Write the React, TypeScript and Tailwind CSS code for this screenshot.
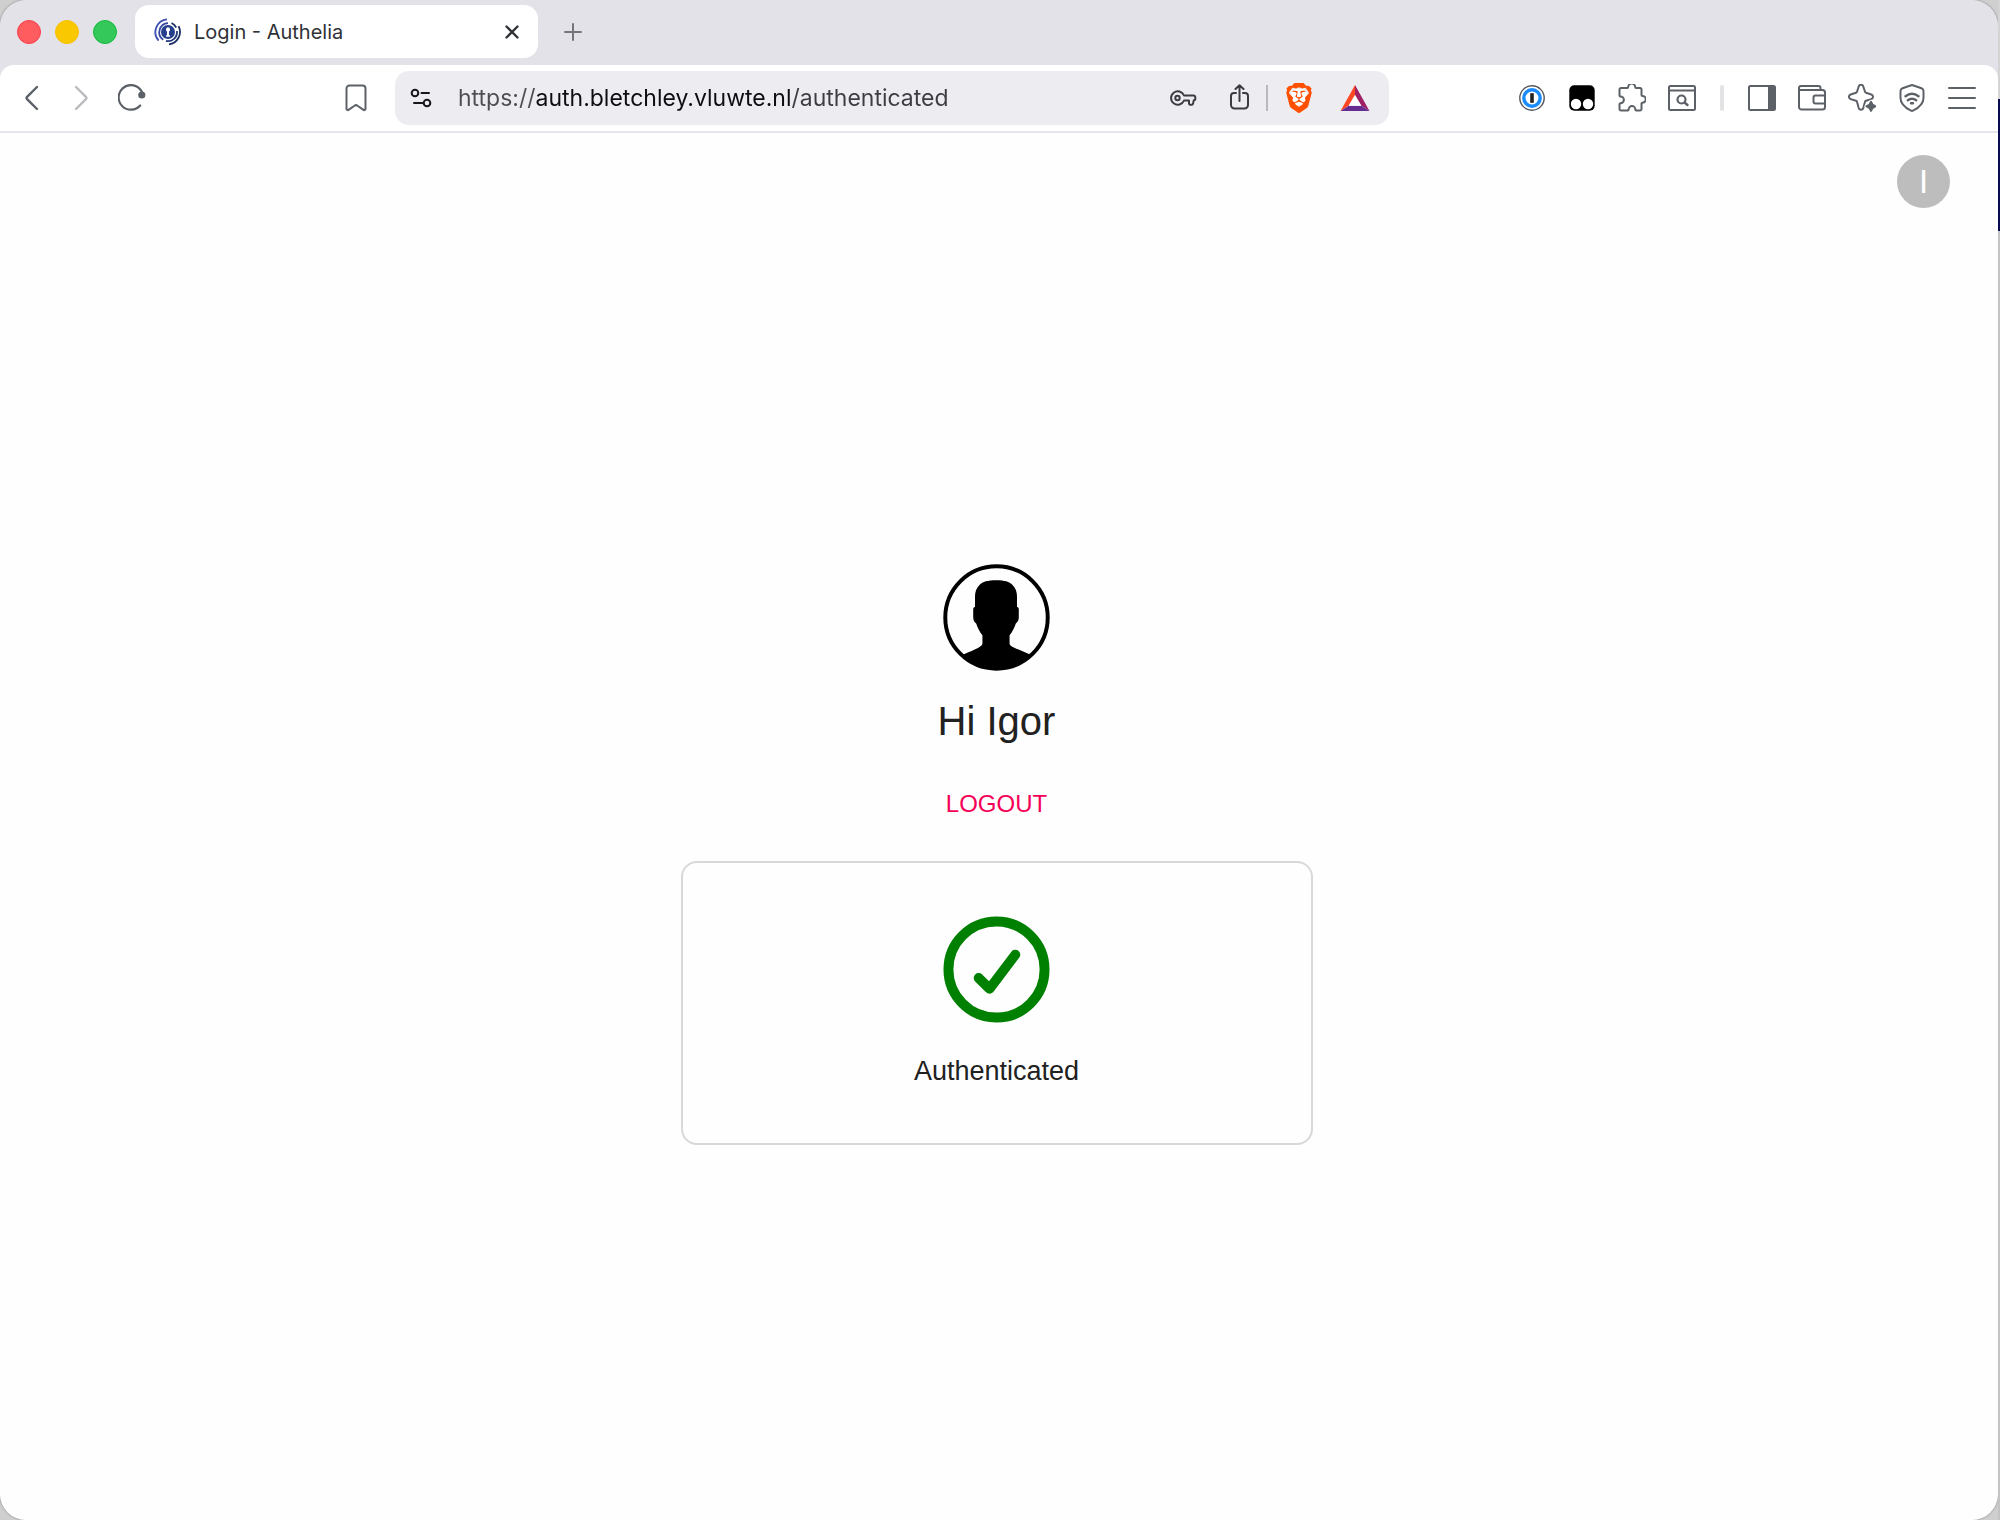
import { useState } from "react";
import type { ReactNode } from "react";
import { SiBrave } from "react-icons/si";

type IconProps = {
  children: ReactNode;
  className?: string;
};

// All toolbar glyphs share a 28px box and a 2px stroke
const Icon = ({ children, className = "" }: IconProps) => (
  <svg
    viewBox="0 0 28 28"
    className={`block size-7 shrink-0 ${className}`}
    fill="none"
    stroke="currentColor"
    strokeWidth="2"
    strokeLinecap="round"
    strokeLinejoin="round"
    aria-hidden="true"
  >
    {children}
  </svg>
);

const AutheliaLogo = () => (
  <svg viewBox="0 0 28 28" className="block size-7 shrink-0" fill="none" strokeWidth="1.8" aria-hidden="true">
    <path d="M13 1.3A12.9 12.9 0 0 0 4.6 22.6" stroke="#3f51b5" />
    <path d="M14 5.1A9.2 9.2 0 0 0 9.2 21.8" stroke="#3548a0" />
    <path d="M17.5 5A9.600 9.600 0 0 1 22.200 9.500" stroke="#1c2f66" />
    <path d="M24.6 8.2A12.6 12.6 0 0 1 15 26.4" stroke="#1c2f66" />
    <path d="M23 13A9.2 9.2 0 0 1 12 23" stroke="#223a80" />
    <circle cx="14" cy="14" r="7" fill="#263f8c" />
    <path d="M14 9.3a2.2 2.2 0 0 1 1 4.1v3.8h1v1.6h-4v-1.6h1v-3.8a2.2 2.2 0 0 1 1-4.1z" fill="#fff" />
  </svg>
);

const BatLogo = () => (
  <svg viewBox="0 0 30 28" className="block h-7 w-[30px] shrink-0" aria-hidden="true">
    <path d="M15 1L.5 27l8.2-5.2L15 11z" fill="#ff4724" />
    <path d="M15 1l14.5 26-8.2-5.2L15 11z" fill="#9e1f63" />
    <path d="M.5 27h29l-8.2-5.2H8.7z" fill="#662d91" />
    <path d="M15 11l6.3 10.8H8.7z" fill="#fff" />
  </svg>
);

const UserPortrait = () => (
  <svg viewBox="0 0 108 108" className="block size-[107px]" role="img" aria-label="User">
    <defs>
      <clipPath id="portrait">
        <circle cx="54" cy="54" r="52" />
      </clipPath>
    </defs>
    <circle cx="54" cy="54" r="51.7" fill="none" stroke="#000" strokeWidth="4" />
    <path
      clipPath="url(#portrait)"
      d="M54 16.5C62 16.5 67 18 70 21c3.500 3.500 4.700 7.500 4.700 12v10.500c1.400 0 1.800 1 1.800 3v7c0 3-.8 5-3 6.500-1.500 4.500-3.500 8.500-6.300 12v8c0 1.500.8 2.300 2.300 3.200C75 86.500 82 88.500 91 93v15H17V93c9-4.500 16-6.500 20.500-9.800 1.500-.9 2.300-1.700 2.300-3.200v-8c-2.800-3.500-4.800-7.500-6.300-12-2.200-1.500-3-3.500-3-6.500v-7c0-2 .4-3 1.800-3V33c0-4.500 1.200-8.500 4.700-12 3-3 8-4.500 17-4.500z"
    />
  </svg>
);

const SuccessIcon = () => (
  <svg viewBox="0 0 108 108" className="block size-[107px]" fill="none" stroke="#008000" strokeWidth="10" role="img" aria-label="Success">
    <circle cx="54" cy="54" r="48.500" />
    <path d="M36 62.500l11 11L73 39" strokeLinecap="round" strokeLinejoin="round" />
  </svg>
);

const TabStrip = () => (
  <div className="flex h-[65px] items-start bg-[#e3e2e8] pt-[5px] pl-[17px]">
    <div className="flex h-[53px] items-center gap-[14px]">
      <button type="button" aria-label="Close window" className="size-6 rounded-full border border-[#fa3e48] bg-[#ff5c60]" />
      <button type="button" aria-label="Minimize window" className="size-6 rounded-full border border-[#f5bf00] bg-[#fac800]" />
      <button type="button" aria-label="Zoom window" className="size-6 rounded-full border border-[#13bb3c] bg-[#34c759]" />
    </div>
    <div className="ml-[18px] flex h-[53px] w-[403px] items-center rounded-[14px] bg-white pr-4 pl-[19px]">
      <AutheliaLogo />
      <span className="ml-3 flex-1 text-[20px] leading-6 text-[#2f3237]">Login - Authelia</span>
      <button type="button" aria-label="Close tab" className="text-[#303338]">
        <svg viewBox="0 0 20 20" className="block size-5" fill="none" stroke="currentColor" strokeWidth="2.4" strokeLinecap="round">
          <path d="M4.500 4.500l11 11M15.500 4.500l-11 11" />
        </svg>
      </button>
    </div>
    <button type="button" aria-label="New tab" className="ml-[21px] flex h-[53px] items-center text-[#76757b]">
      <Icon>
        <path d="M14 6v16M6 14h16" />
      </Icon>
    </button>
  </div>
);

const AddressBar = () => {
  const [url, setUrl] = useState("https://auth.bletchley.vluwte.nl/authenticated");

  return (
    <div className="ml-[25px] flex h-[54px] min-w-0 flex-1 items-center rounded-[14px] bg-[#edecf1] pr-[19px] pl-[14px] text-[#3b3b42]">
      <button type="button" aria-label="Site information" className="text-[#17171b]">
        <svg viewBox="0 0 24 24" className="block size-6" fill="none" stroke="currentColor" strokeWidth="2" strokeLinecap="round">
          <circle cx="6" cy="7" r="3.300" />
          <path d="M12.500 7H20" />
          <circle cx="18" cy="17" r="3.300" />
          <path d="M5 17h8.500" />
        </svg>
      </button>
      {/* The host is darker than the scheme and the path */}
      <input
        type="text"
        aria-label="Address"
        value={url}
        onChange={(e) => setUrl(e.target.value)}
        spellCheck={false}
        className="ml-[25px] h-10 min-w-0 flex-1 bg-[linear-gradient(90deg,#4d4d54_78px,#0e0e12_78px,#0e0e12_333px,#3c3c43_333px)] bg-clip-text text-[23px] text-transparent outline-none"
      />
      <button type="button" aria-label="Passwords">
        <Icon>
          <circle cx="8.500" cy="14" r="2.200" />
          <path d="M15 11.500h9.500a1.800 1.800 0 0 1 1.800 1.800v1.400a1.500 1.500 0 0 1-1.500 1.500l-.8 3.500a1.200 1.200 0 0 1-1.200 1h-1.600a1.200 1.200 0 0 1-1.200-1V16.500h-5a6.700 6.700 0 1 1 0-5z" />
        </Icon>
      </button>
      <button type="button" aria-label="Share" className="ml-[29px]">
        <Icon>
          <path d="M10 9H8a3 3 0 0 0-3 3v9a3.500 3.500 0 0 0 3.500 3.500h10A3.500 3.500 0 0 0 22 21v-9a3 3 0 0 0-3-3h-2M13.500 17V1.500M9.500 5l4-3.800 4 3.800" />
        </Icon>
      </button>
      <span className="ml-3 h-[26px] w-[2px] bg-[#b9b9be]" />
      <button type="button" aria-label="Brave Shields" className="relative ml-[17px] flex h-[30px] w-7 items-center justify-center">
        <span className="absolute inset-x-1.5 top-1.5 bottom-2 rounded-[6px] bg-white" />
        <SiBrave className="relative size-[30px] shrink-0 text-[#ff5000]" />
      </button>
      <button type="button" aria-label="Brave Rewards" className="ml-[27px]">
        <BatLogo />
      </button>
    </div>
  );
};

const Toolbar = () => (
  <div className="bg-[#e3e2e8]">
    <div className="flex h-[68px] items-center rounded-t-[14px] border-b-2 border-[#e6e5ec] bg-white pr-[22px] pl-[18px] text-[#5c6067]">
      <div className="flex items-center gap-[22px]">
        <button type="button" aria-label="Back">
          <Icon>
            <path d="M19 3L8.800 13.200a1.200 1.200 0 0 0 0 1.600L19 25" strokeWidth="2.400" />
          </Icon>
        </button>
        <button type="button" aria-label="Forward" className="text-[#b9bbbf]">
          <Icon>
            <path d="M8 3l10.200 10.200a1.200 1.200 0 0 1 0 1.600L8 25" strokeWidth="2.400" />
          </Icon>
        </button>
        <button type="button" aria-label="Reload">
          <Icon>
            <path d="M22.200 21.500A12.300 12.300 0 1 1 22.500 5.700L24 8" strokeWidth="2.200" />
            <circle cx="23.800" cy="11" r="3.600" fill="currentColor" stroke="none" />
          </Icon>
        </button>
      </div>
      <button type="button" aria-label="Bookmark this tab" className="ml-[196px]">
        <Icon>
          <path d="M7.500 1.500h13a3 3 0 0 1 3 3v20.300a1.300 1.300 0 0 1-2 1.100l-6-4.200a2.500 2.500 0 0 0-3 0l-6 4.200a1.300 1.300 0 0 1-2-1.100V4.500a3 3 0 0 1 3-3z" />
        </Icon>
      </button>
      <AddressBar />
      <div className="ml-[129px] flex items-center gap-[22px]">
        <button type="button" aria-label="1Password">
          <Icon>
            <circle cx="14" cy="14" r="12.200" stroke="#55565a" strokeWidth="1.400" fill="#fff" />
            <circle cx="14" cy="14" r="8.200" stroke="#1a8cff" strokeWidth="3.400" />
            <path d="M14 9.200v9.600" stroke="#222" strokeWidth="3.600" strokeLinecap="butt" />
          </Icon>
        </button>
        <button type="button" aria-label="Tampermonkey">
          <Icon>
            <rect x="1.300" y="1.300" width="25.400" height="25.400" rx="5" fill="#000" stroke="none" />
            <circle cx="8" cy="20" r="5.200" fill="#fff" stroke="none" />
            <circle cx="20" cy="20" r="5.200" fill="#fff" stroke="none" />
          </Icon>
        </button>
        <button type="button" aria-label="Extensions">
          <Icon>
            <path d="M3 4h6.300c.6 0 .9-.4.9-1a3.500 3.500 0 0 1 7 0c0 .6.300 1 .9 1H22a1.500 1.500 0 0 1 1.500 1.500V11c0 .6.300.9.900.9a3.400 3.400 0 0 1 0 6.800c-.6 0-.9.300-.9.900V25a1.500 1.500 0 0 1-1.500 1.500h-3.800c-.6 0-.8-.400-.8-1a3.400 3.400 0 0 0-6.800 0c0 .6-.200 1-.800 1H3A1.500 1.500 0 0 1 1.500 25v-5c0-.6.400-.8 1-.8a3.400 3.400 0 0 0 0-6.800c-.6 0-1-.300-1-.9v-6A1.500 1.500 0 0 1 3 4z" />
          </Icon>
        </button>
        <button type="button" aria-label="Search tabs">
          <Icon>
            <rect x="1" y="2" width="26" height="24" rx="1.500" />
            <path d="M1.500 6.500h25" />
            <circle cx="13.500" cy="15.500" r="4" strokeWidth="2.200" />
            <path d="M16.500 18.500l3 2.500" strokeWidth="2.400" />
          </Icon>
        </button>
        <span className="mx-[2px] h-[26px] w-1 rounded-sm bg-[#e3e3e6]" />
        <button type="button" aria-label="Sidebar">
          <Icon>
            <rect x="1" y="2" width="26" height="24" rx="1.500" />
            <path d="M20 2h6.500v24H20z" fill="currentColor" stroke="none" />
          </Icon>
        </button>
        <button type="button" aria-label="Wallet">
          <Icon>
            <path d="M22.500 6V4a2 2 0 0 0-2-2H3a2 2 0 0 0-2 2v19a2.500 2.500 0 0 0 2.500 2.500h21A2.500 2.500 0 0 0 27 23V8.500A2.500 2.500 0 0 0 24.500 6H2.500M27 11.500H17.500a2 2 0 0 0-2 2v4a2 2 0 0 0 2 2H27" />
          </Icon>
        </button>
        <button type="button" aria-label="Leo AI">
          <Icon>
            <path d="M10.700 2.500c.7-2.300 3.900-2.300 4.600 0l1.700 5.300a1.500 1.500 0 0 0 1 1l5.300 1.700c2.300.7 2.300 3.900 0 4.600L18 16.800a1.500 1.500 0 0 0-1 1l-1.700 6.300c-.7 2.300-3.900 2.300-4.600 0L9 17.800a1.500 1.500 0 0 0-1-1L2.700 15.100c-2.300-.7-2.300-3.900 0-4.600L8 8.800a1.500 1.500 0 0 0 1-1z" />
            <path d="M23 17.800c.6 2.900 1.500 3.700 4.500 4.500-3 .8-3.900 1.700-4.500 4.600-.6-2.900-1.500-3.800-4.500-4.600 3-.8 3.900-1.600 4.500-4.500z" fill="#fff" stroke="#fff" strokeWidth="4" />
            <path d="M23 17.800c.6 2.900 1.500 3.700 4.500 4.500-3 .8-3.900 1.700-4.500 4.600-.6-2.900-1.500-3.800-4.500-4.600 3-.8 3.900-1.600 4.500-4.500z" fill="currentColor" />
          </Icon>
        </button>
        <button type="button" aria-label="VPN">
          <Icon>
            <path d="M14 1l9.500 3.300c1.300.5 2 1.300 2 2.700v7c0 6-4.500 9.700-10.500 12.700a2.200 2.200 0 0 1-2 0C7 23.700 2.500 20 2.500 14V7c0-1.400.7-2.200 2-2.700z" />
            <path d="M7.500 12.200c4-3 9-3 13 0M9.800 16.300c2.700-2 5.700-2 8.400 0M13 19.300h2" strokeWidth="2.400" />
          </Icon>
        </button>
        <button type="button" aria-label="Menu">
          <Icon>
            <path d="M1 4h26M1 14h26M1 24h26" />
          </Icon>
        </button>
      </div>
    </div>
  </div>
);

const AuthenticatedView = () => (
  <main className="flex flex-1 flex-col bg-[#fefefe] pr-[5px] font-['Liberation_Sans',Arial,sans-serif] text-[#212121]">
    <div className="flex justify-end pt-[22px] pr-[43px]">
      <button type="button" aria-label="Account" className="flex size-[53px] items-center justify-center rounded-full bg-[#bdbdbd] text-[33px] leading-none text-white">
        I
      </button>
    </div>

    <div className="flex flex-1 flex-col items-center justify-center pb-[19px]">
      <UserPortrait />
      <h1 className="mt-6 text-[40px] leading-[53px]">Hi Igor</h1>
      <button type="button" className="mt-8 px-3 py-2 text-[24px] leading-8 text-[#f50057] uppercase">
        Logout
      </button>
      <section className="mt-[33px] flex w-full max-w-[632px] flex-col items-center rounded-[16px] border-2 border-[#d8d8d8] pt-[53px] pb-[54px]">
        <SuccessIcon />
        <p className="mt-[30px] text-[27px] leading-9">Authenticated</p>
      </section>
    </div>
  </main>
);

const App = () => {
  return (
    <div className="flex min-h-screen bg-[#cfcfd0] font-['Inter',sans-serif]">
      <div className="flex min-w-0 flex-1 flex-col overflow-hidden rounded-[26px] shadow-[0_0_2px_#00000080]">
        <TabStrip />
        <Toolbar />
        <AuthenticatedView />
      </div>
      {/* Sliver of the desktop behind the window */}
      <div className="flex w-[2px] flex-col">
        <div className="h-[99px] bg-[#d4d4d4]" />
        <div className="h-[132px] bg-[#0a0a50]" />
        <div className="flex-1 bg-[#c4c4c4]" />
      </div>
    </div>
  );
};

export default App;
